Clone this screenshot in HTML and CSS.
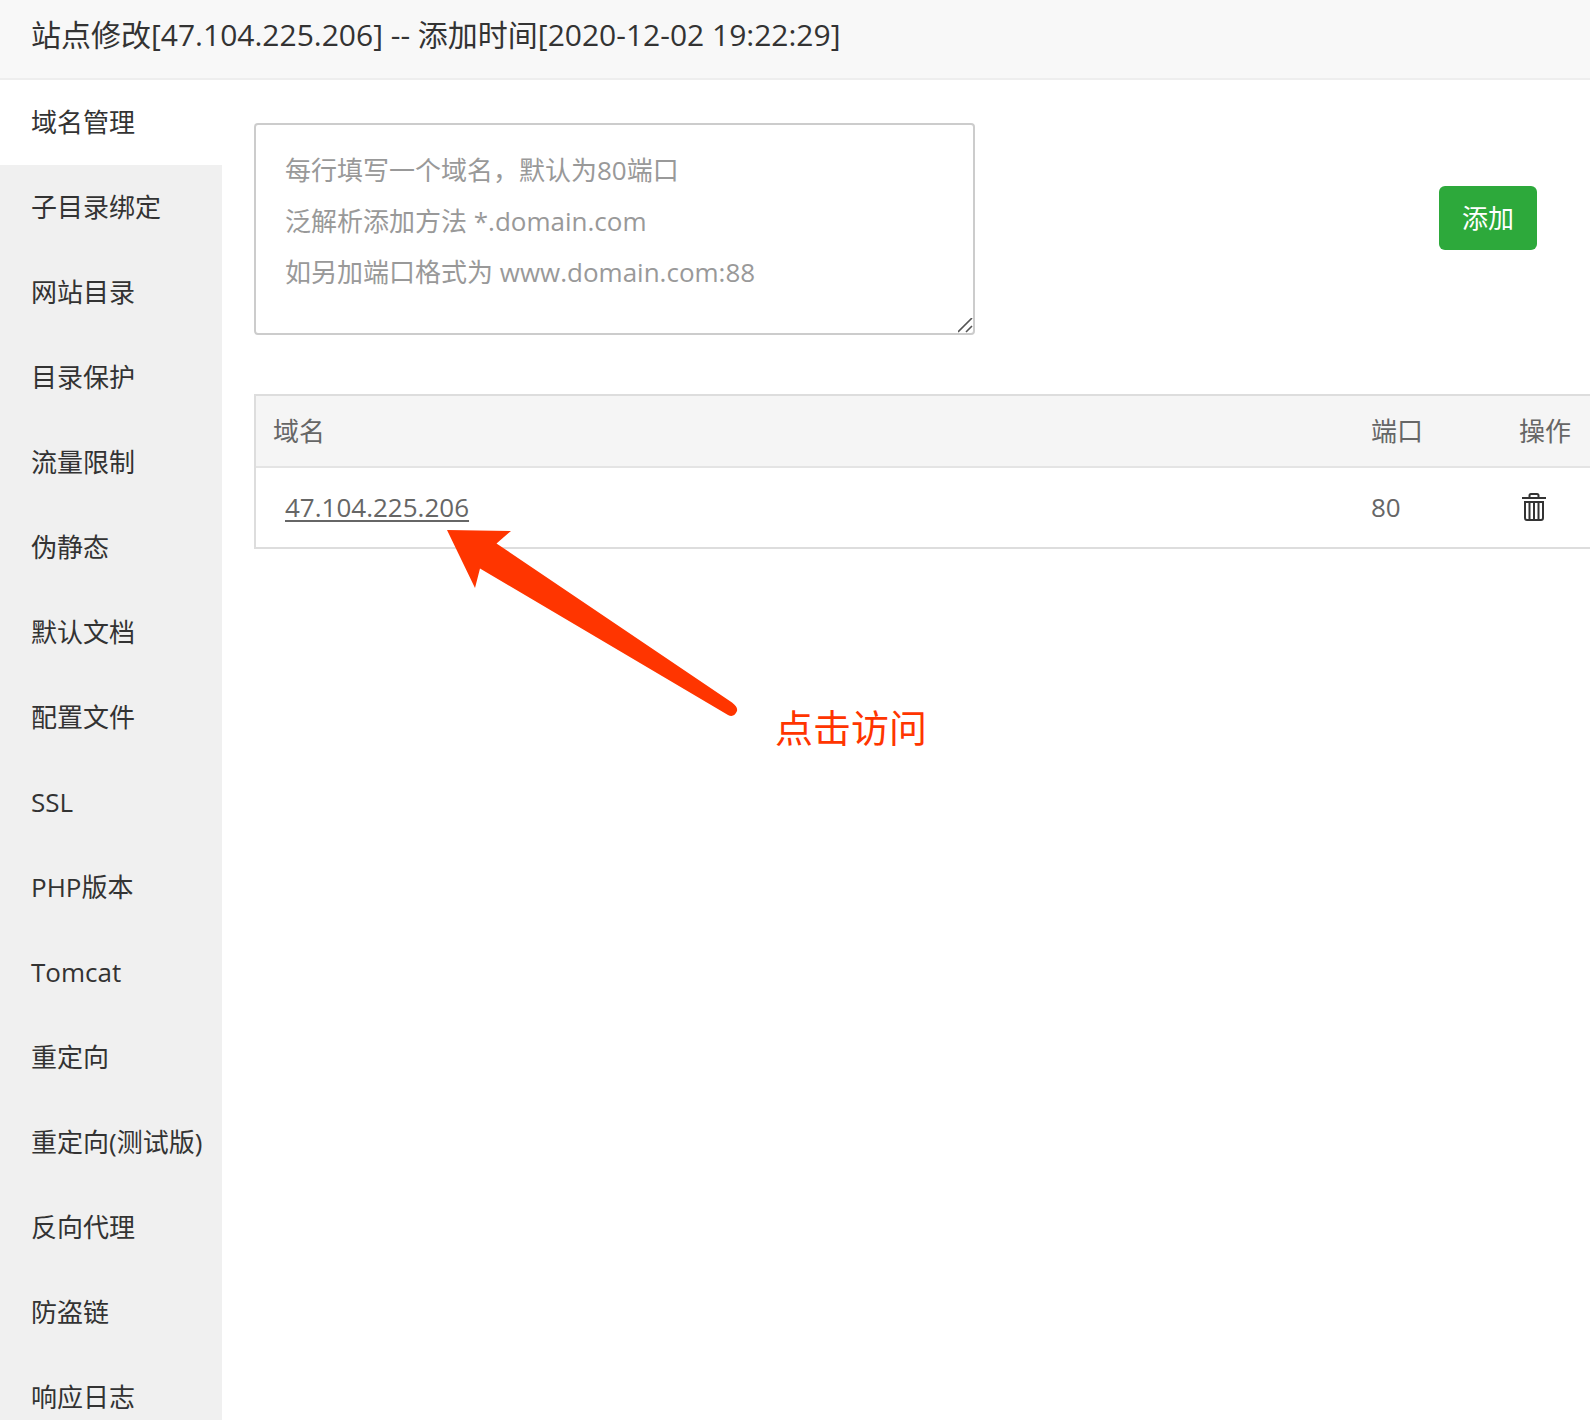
FILE: index.html
```html
<!DOCTYPE html>
<html lang="zh-CN">
<head>
    <meta charset="UTF-8">
    <meta name="viewport" content="width=device-width, initial-scale=1.0">
    <title>站点修改</title>
    <link rel="stylesheet" href="styles.css">
</head>
<body>
    <header class="title-bar">
        <h1>站点修改[47.104.225.206] -- 添加时间[2020-12-02 19:22:29]</h1>
    </header>

    <div class="layout">
        <nav class="site-menu">
            <a class="active" href="#">域名管理</a>
            <a href="#">子目录绑定</a>
            <a href="#">网站目录</a>
            <a href="#">目录保护</a>
            <a href="#">流量限制</a>
            <a href="#">伪静态</a>
            <a href="#">默认文档</a>
            <a href="#">配置文件</a>
            <a href="#">SSL</a>
            <a href="#">PHP版本</a>
            <a href="#">Tomcat</a>
            <a href="#">重定向</a>
            <a href="#">重定向(测试版)</a>
            <a href="#">反向代理</a>
            <a href="#">防盗链</a>
            <a href="#">响应日志</a>
        </nav>

        <main class="content">
            <form class="domain-form">
                <textarea id="domains" aria-label="域名" placeholder="每行填写一个域名，默认为80端口&#10;泛解析添加方法 *.domain.com&#10;如另加端口格式为 www.domain.com:88"></textarea>
                <button class="btn-add" type="button">添加</button>
            </form>

            <table class="domain-table">
                <thead>
                    <tr>
                        <th>域名</th>
                        <th class="col-port">端口</th>
                        <th class="col-action">操作</th>
                    </tr>
                </thead>
                <tbody>
                    <tr>
                        <td><a class="domain-link" href="#">47.104.225.206</a></td>
                        <td>80</td>
                        <td>
                            <button class="btn-delete" type="button" aria-label="删除">
                                <svg width="24" height="28" viewBox="0 0 24 28" fill="none" stroke="#333" stroke-width="2">
                                    <path d="M0 5H24M7.500 4V2.500Q7.500 1 9 1H15Q16.500 1 16.500 2.500V4"/>
                                    <path d="M3 9H21V25Q21 27 19 27H5Q3 27 3 25Z"/>
                                    <path d="M7.500 9V27M12 9V27M16.500 9V27"/>
                                </svg>
                            </button>
                        </td>
                    </tr>
                </tbody>
            </table>

            <!-- pointer to the domain link -->
            <div class="hint">
                <svg width="292" height="188" viewBox="0 0 292 188">
                    <path fill="#ff3500" d="M0 0L64 1L49.500 13.500L285 172.500Q291 177 290 181Q287 188 281 185L33 38.500L28 58Z"/>
                </svg>
                <span>点击访问</span>
            </div>
        </main>
    </div>
</body>
</html>
```

FILE: styles.css
```css
* {
    margin: 0;
    padding: 0;
    box-sizing: border-box;
}

body {
    display: flex;
    flex-direction: column;
    height: 100vh;
    overflow: hidden;
    font-family: "Open Sans", "Noto Sans CJK SC", sans-serif;
    font-size: 26px;
    color: #333;
    background-color: #fff;
}

.title-bar {
    flex: none;
    height: 80px;
    padding: 0 31px;
    background-color: #f8f8f8;
    border-bottom: 2px solid #eee;
}

h1 {
    font-size: 30px;
    font-weight: normal;
    line-height: 70px;
    white-space: nowrap;
}

.layout {
    display: flex;
    flex: 1;
    min-height: 0;
}

.site-menu {
    flex: none;
    width: 222px;
    background-color: #f0f0f0;
}

.site-menu a {
    display: block;
    padding-left: 31px;
    line-height: 85px;
    color: #333;
    text-decoration: none;
    white-space: nowrap;
}

.site-menu .active {
    background-color: #fff;
}

.content {
    position: relative;
    flex: 1;
    min-width: 0;
    padding: 43px 0 0 32px;
}

.domain-form {
    display: flex;
    justify-content: space-between;
    align-items: flex-start;
    margin-bottom: 59px;
}

textarea {
    width: 721px;
    height: 212px;
    padding: 20px 29px;
    border: 2px solid #ccc;
    border-radius: 4px;
    font: inherit;
    line-height: 51px;
    color: #555;
    resize: both;
}

textarea::placeholder {
    color: #999;
}

textarea::-webkit-resizer {
    background: url("data:image/svg+xml,%3Csvg xmlns='http://www.w3.org/2000/svg' width='15' height='15' viewBox='0 0 15 15'%3E%3Cpath d='M0 14L14 0M8 14L14 8' stroke='%23555' stroke-width='1.6'/%3E%3C/svg%3E") no-repeat left top;
}

.btn-add {
    margin: 63px 53px 0 0;
    padding: 0 23px;
    border: none;
    border-radius: 6px;
    font: inherit;
    line-height: 64px;
    color: #fff;
    background-color: #2da93b;
    cursor: pointer;
}

.domain-table {
    width: 100%;
    border: 2px solid #ddd;
    border-right: none;
    border-spacing: 0;
    table-layout: fixed;
    color: #666;
}

.domain-table th {
    height: 72px;
    padding: 0 17px 2px;
    border-bottom: 2px solid #e4e4e4;
    font-weight: normal;
    text-align: left;
    background-color: #f5f5f5;
}

.domain-table td {
    height: 79px;
    padding: 0 17px 2px;
}

.domain-table .col-port {
    width: 148px;
}

.domain-table .col-action {
    width: 88px;
    padding-right: 0;
}

.domain-link {
    margin-left: 12px;
    color: #666;
    text-underline-offset: 3px;
    text-decoration-thickness: 2px;
}

.btn-delete {
    display: block;
    margin-left: 3px;
    border: none;
    background: none;
    cursor: pointer;
}

.btn-delete svg {
    display: block;
}

.hint {
    position: absolute;
    top: 450px;
    left: 225px;
    display: flex;
    align-items: flex-end;
    gap: 36px;
    font-size: 38px;
    line-height: 38px;
    color: #ff3500;
    pointer-events: none;
}

.hint span {
    margin-bottom: -28px;
}
```
